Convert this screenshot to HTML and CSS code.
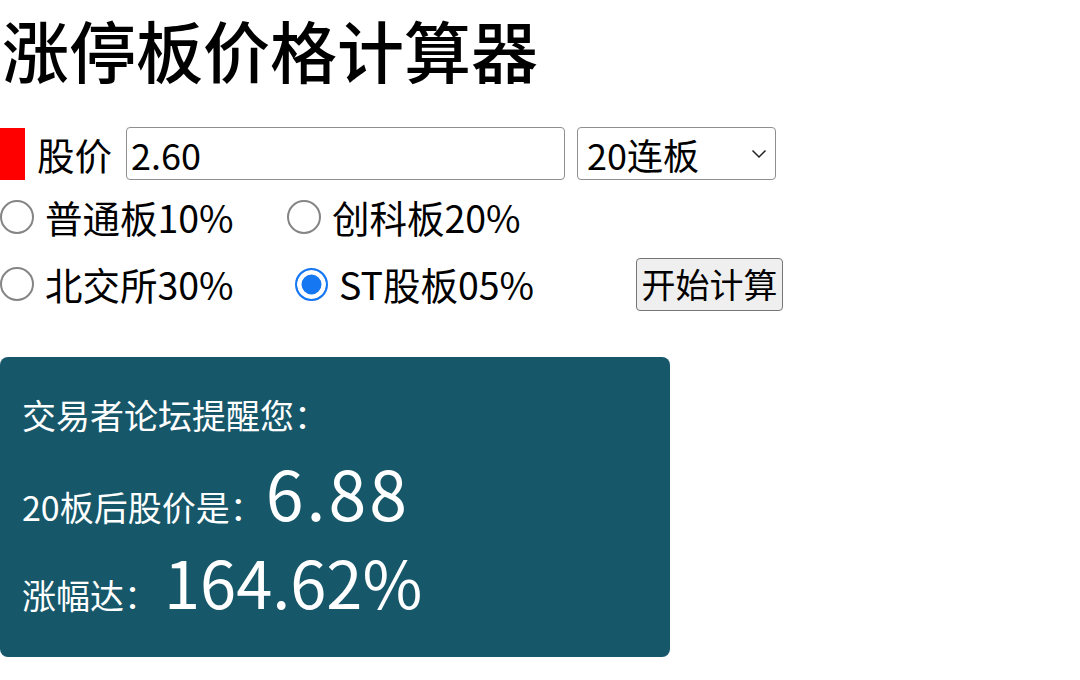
FILE: index.html
```html
<!DOCTYPE html>
<html lang="zh-CN">
<head>
<meta charset="utf-8">
<title>涨停板价格计算器</title>
<link rel="stylesheet" href="styles.css">
</head>
<body>
<h1 class="title">涨停板价格计算器</h1>
<div class="price-row">
  <span class="marker"></span>
  <label class="price-label" for="price">股价</label>
  <input class="price-input" id="price" type="text" value="2.60">
  <div class="select">
    <span class="select-text">20连板</span>
    <svg class="select-arrow" width="16" height="10" viewBox="0 0 16 10"><path d="M1.5 1.5 L8 8 L14.5 1.5" fill="none" stroke="#222" stroke-width="1.5"/></svg>
  </div>
</div>
<div class="radio-row">
  <label class="opt opt-a"><span class="radio"></span><span class="opt-text">普通板10%</span></label>
  <label class="opt"><span class="radio"></span><span class="opt-text">创科板20%</span></label>
</div>
<div class="radio-row row2">
  <label class="opt opt-b"><span class="radio"></span><span class="opt-text">北交所30%</span></label>
  <label class="opt opt-c"><span class="radio checked"></span><span class="opt-text">ST股板05%</span></label>
  <button class="calc-btn" type="button">开始计算</button>
</div>
<div class="card">
  <div class="card-line">交易者论坛提醒您：</div>
  <div class="card-row first"><span class="card-label">20板后股价是：</span><span class="big price-val">6.88</span></div>
  <div class="card-row second"><span class="card-label">涨幅达：</span><span class="big pct-val">164.62%</span></div>
</div>
</body>
</html>
```
FILE: styles.css
```css
html, body {
  margin: 0;
  padding: 0;
  background: #ffffff;
}
body {
  font-family: "Noto Sans CJK SC", "Noto Sans", sans-serif;
  color: #000;
  width: 1080px;
  height: 680px;
  overflow: hidden;
}
.title {
  margin: 0;
  font-size: 67px;
  line-height: 97px;
  font-weight: 500;
  padding-left: 2px;
}
.price-row {
  display: flex;
  align-items: center;
  margin-top: 30px;
  height: 53px;
}
.marker {
  width: 25px;
  height: 52px;
  background: #ff0000;
}
.price-label {
  font-size: 37.5px;
  margin-left: 12px;
  line-height: 53px;
}
.price-input {
  box-sizing: border-box;
  width: 439px;
  height: 53px;
  margin: 0 0 0 14px;
  border: 1.5px solid #8f8f8f;
  border-radius: 4px;
  padding: 0 0 0 4px;
  font-family: "Noto Sans CJK SC", "Noto Sans", sans-serif;
  font-size: 36px;
  color: #000;
  outline: none;
}
.select {
  box-sizing: border-box;
  width: 199px;
  height: 53px;
  margin-left: 12px;
  border: 1.5px solid #8f8f8f;
  border-radius: 4px;
  display: flex;
  align-items: center;
  justify-content: space-between;
  padding: 0 8px 0 9px;
}
.select-text {
  font-size: 36px;
  line-height: 50px;
}
.select-arrow {
  display: block;
}
.radio-row {
  display: flex;
  align-items: center;
  height: 56px;
  margin-top: 9px;
}
.row2 {
  margin-top: 11px;
}
.opt {
  display: flex;
  align-items: center;
}
.opt-a {
  width: 287px;
}
.opt-b {
  width: 295px;
}
.opt-c {
  width: 341px;
}
.radio {
  box-sizing: border-box;
  flex: none;
  width: 34px;
  height: 34px;
  border-radius: 50%;
  border: 2px solid #858585;
  background: #fff;
}
.radio.checked {
  width: 33px;
  height: 33px;
  border: 2.5px solid #1677f2;
  box-shadow: inset 0 0 0 4.5px #fff;
  background: #1677f2;
}
.opt-text {
  font-size: 37.5px;
  margin-left: 11px;
  line-height: 56px;
}
.calc-btn {
  box-sizing: border-box;
  width: 147px;
  height: 53px;
  background: #efefef;
  border: 1.5px solid #767676;
  border-radius: 4px;
  font-family: "Noto Sans CJK SC", "Noto Sans", sans-serif;
  font-size: 34px;
  color: #000;
  padding: 0;
  line-height: 50px;
}
.card {
  box-sizing: border-box;
  width: 670px;
  height: 300px;
  margin-top: 45px;
  background: #165769;
  border-radius: 8px;
  color: #fff;
  padding: 34px 22px 0 22px;
}
.card-line {
  font-size: 34px;
  line-height: 48px;
}
.card-row {
  display: flex;
  align-items: baseline;
}
.card-row.first {
  margin-top: 19px;
}
.card-row.second {
  margin-top: 18px;
}
.card-label {
  font-size: 34px;
  line-height: 48px;
}
.big {
  line-height: 1;
}
.price-val {
  font-size: 68px;
  letter-spacing: 3px;
  margin-left: 2px;
}
.pct-val {
  font-size: 65px;
  margin-left: 6px;
}
```
